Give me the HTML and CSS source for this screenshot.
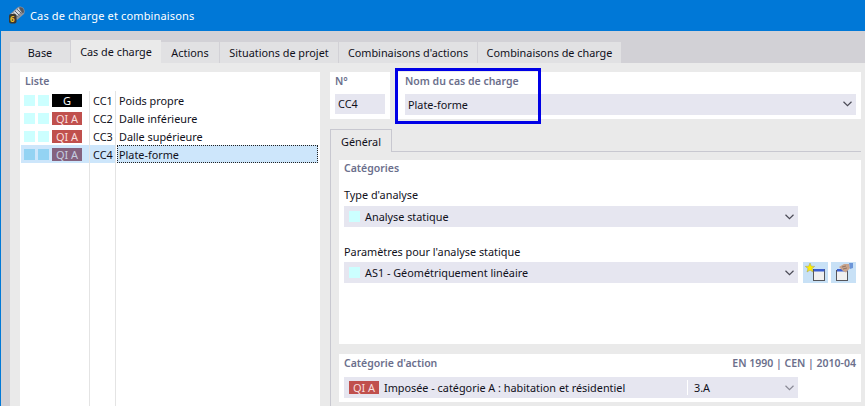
FILE: index.html
```
<!DOCTYPE html>
<html lang="fr">
<head>
<meta charset="utf-8">
<title>Cas de charge et combinaisons</title>
<link rel="stylesheet" href="styles.css">
</head>
<body>
<div class="window">
  <header class="titlebar">
    <svg class="app-icon" width="18" height="18" viewBox="0 0 18 18">
      <path d="M2 8 L10 1 Q13 -0.5 15.5 2 Q17.5 5 16 8 L9 14 Z" fill="#8f959f"/>
      <path d="M3.5 8 L10.5 2 L13 6 L7 12 Z" fill="#d3d7de"/>
      <path d="M11 1.5 Q14 0.5 15.5 3 Q16.5 6 15 7.5 Q12.5 5 11 1.5 Z" fill="#55585f"/>
      <path d="M5 6.5 L9.5 11 M7 5 L11.5 9.5 M9 3.2 L13.5 7.5" stroke="#5d6069" stroke-width="1" fill="none"/>
      <rect x="1" y="8" width="7.5" height="9.5" rx="2" fill="#3a3830"/>
      <text x="2" y="16" class="app-six">6</text>
    </svg>
    <span>Cas de charge et combinaisons</span>
  </header>
  <main class="content">
    <nav class="tabs">
      <div class="tab tab-base">Base</div>
      <div class="tab active tab-cas">Cas de charge</div>
      <div class="tab tab-actions">Actions</div>
      <div class="tab tab-sit">Situations de projet</div>
      <div class="tab tab-ca">Combinaisons d'actions</div>
      <div class="tab tab-cc">Combinaisons de charge</div>
    </nav>
    <div class="page">
      <section class="list">
        <h2 class="list-title">Liste</h2>
        <div class="rows">
          <div class="row">
            <div class="marks"><i class="sw"></i><i class="sw"></i><b class="badge black">G</b></div>
            <div class="code">CC1</div>
            <div class="name">Poids propre</div>
          </div>
          <div class="row">
            <div class="marks"><i class="sw"></i><i class="sw"></i><b class="badge red">QI A</b></div>
            <div class="code">CC2</div>
            <div class="name">Dalle inférieure</div>
          </div>
          <div class="row">
            <div class="marks"><i class="sw"></i><i class="sw"></i><b class="badge red">QI A</b></div>
            <div class="code">CC3</div>
            <div class="name">Dalle supérieure</div>
          </div>
          <div class="row selected">
            <div class="marks"><i class="sw"></i><i class="sw"></i><b class="badge dim">QI A</b></div>
            <div class="code">CC4</div>
            <div class="name">Plate-forme</div>
          </div>
          <div class="row filler">
            <div class="marks"></div>
            <div class="code"></div>
            <div class="name"></div>
          </div>
        </div>
      </section>
      <section class="detail">
        <div class="head">
          <div class="card card-no">
            <div class="label">N°</div>
            <div class="field head-field short">CC4</div>
          </div>
          <div class="card card-name">
            <div class="label">Nom du cas de charge</div>
            <div class="field head-field between">Plate-forme
              <svg class="chev" width="9" height="6" viewBox="0 0 9 6"><path d="M0.5 0.8 L4.5 4.6 L8.5 0.8" fill="none" stroke="#4a4a55" stroke-width="1.2"/></svg>
            </div>
            <div class="highlight"></div>
          </div>
        </div>
        <div class="subtabs"><div class="subtab">Général</div></div>
        <div class="subpage">
          <div class="group group-cat">
            <h3 class="group-title">Catégories</h3>
            <div class="flabel first">Type d'analyse</div>
            <div class="select-row">
              <div class="field select"><span class="sel-l"><i class="sw"></i>Analyse statique</span>
                <svg class="chev" width="9" height="6" viewBox="0 0 9 6"><path d="M0.5 0.8 L4.5 4.6 L8.5 0.8" fill="none" stroke="#4a4a55" stroke-width="1.2"/></svg>
              </div>
            </div>
            <div class="flabel second">Paramètres pour l'analyse statique</div>
            <div class="select-row">
              <div class="field select"><span class="sel-l"><i class="sw"></i>AS1 - Géométriquement linéaire</span>
                <svg class="chev" width="9" height="6" viewBox="0 0 9 6"><path d="M0.5 0.8 L4.5 4.6 L8.5 0.8" fill="none" stroke="#4a4a55" stroke-width="1.2"/></svg>
              </div>
              <div class="icon-btn">
                <svg width="21" height="19" viewBox="0 0 21 19">
                  <rect x="8.5" y="6.5" width="11" height="11" fill="#f0f0f0" stroke="#55555a"/>
                  <rect x="9" y="6" width="10.5" height="2.5" fill="#3a5fd0"/>
                  <path d="M5 0 L6.3 3.2 L9.7 3.4 L7 5.6 L8 9 L5 7.1 L2 9 L3 5.6 L0.3 3.4 L3.7 3.2 Z" fill="#ffee00" stroke="#a8a04a" stroke-width=".5"/>
                </svg>
              </div>
              <div class="icon-btn">
                <svg width="21" height="19" viewBox="0 0 21 19">
                  <rect x="3.5" y="7.5" width="11" height="10" fill="#f0f0f0" stroke="#55555a"/>
                  <rect x="4" y="6" width="10.5" height="2.5" fill="#3a5fd0"/>
                  <path d="M6 4 L11 1 L16 1 L17 5 L13 9.5 L10 8 Z" fill="#c9a48c"/>
                  <path d="M16 0 L20 0 L20 5 L17 6 Z" fill="#6d96d8"/>
                  <path d="M9 4 L13 3 M10 6 L14 5" stroke="#8f7464" fill="none"/>
                </svg>
              </div>
            </div>
          </div>
          <div class="group group-act">
            <div class="act-head">
              <h3 class="group-title">Catégorie d'action</h3>
              <div class="norm">EN 1990 | CEN | 2010-04</div>
            </div>
            <div class="field select act-select">
              <span class="sel-l act-main"><b class="badge red">QI A</b>Imposée - catégorie A : habitation et résidentiel</span>
              <span class="act-code">3.A</span>
              <svg class="chev" width="9" height="6" viewBox="0 0 9 6"><path d="M0.5 0.8 L4.5 4.6 L8.5 0.8" fill="none" stroke="#8a8a95" stroke-width="1.2"/></svg>
            </div>
          </div>
        </div>
      </section>
    </div>
  </main>
</div>
</body>
</html>
```
FILE: styles.css
```
* { box-sizing: border-box; }
html, body { margin: 0; height: 100%; overflow: hidden; }
body { font-family: "Noto Sans", "Open Sans", sans-serif; font-size: 10.85px; color: #10101a; }
.window { width: 865px; height: 406px; display: flex; flex-direction: column; background: #d2d1d6; overflow: hidden; }
.titlebar { height: 31px; flex: none; background: #0078d7; color: #fff; display: flex; align-items: center; padding: 0 0 1px 8px; font-size: 11px; letter-spacing: .14px; gap: 4px; }
.app-icon { flex: none; }
.app-six { font: bold 8px "Noto Sans", sans-serif; fill: #f2c22e; }
.content { flex: 1; min-height: 0; display: flex; flex-direction: column; padding: 9px 0 0 9px; border-left: 1px solid #0078d7; }
.tabs { display: flex; height: 23px; flex: none; align-items: flex-end; }
.tab { height: 21px; background: #e1e1e3; display: flex; align-items: center; justify-content: center; border-right: 1px solid #d2d1d6; }
.tab.active { height: 23px; background: #eaeaea; border-right: 0; }
.tab-base { width: 61px; }
.tab-cas { width: 90px; }
.tab-actions { width: 59px; }
.tab-sit { width: 119px; }
.tab-ca { width: 139px; }
.tab-cc { width: 144px; }
.page { flex: 1; min-height: 0; background: #eaeaea; display: flex; padding: 9px 4px 0 10px; gap: 10px; }
.list { width: 300px; flex: none; background: #fff; display: flex; flex-direction: column; }
.list-title { margin: 0; font-size: 10.5px; font-weight: 600; color: #6b6f8c; height: 19px; padding: 2px 0 0 5px; line-height: 15px; }
.rows { flex: 1; display: flex; flex-direction: column; padding: 0 1px; }
.row { display: flex; height: 18px; flex: none; }
.row.filler { flex: 1; }
.marks { width: 69px; flex: none; display: flex; align-items: center; gap: 3px; padding-left: 3px; border-right: 1px solid #e4e4e4; }
.code { width: 26px; flex: none; padding-left: 3px; line-height: 19px; border-right: 1px solid #e4e4e4; }
.name { flex: 1; line-height: 19px; padding-left: 3px; }
.sw { display: block; width: 11px; height: 11px; background: #ccffff; flex: none; }
.badge { display: flex; align-items: center; justify-content: center; font-weight: 400; color: #fff; width: 30px; height: 13px; font-size: 11px; flex: none; }
.black { background: #000; }
.red { background: #c0504d; color: #f8dede; }
.dim { background: #84627e; color: #c5cfe0; }
.selected .marks, .selected .code { background: #cde6fb; }
.selected .sw { background: #93d3f3; }
.selected .name { background: #cde6fb; outline: 1px dotted #222; outline-offset: -1px; margin: 0 1px; padding-left: 2px; }
.detail { flex: 1; min-width: 0; display: flex; flex-direction: column; }
.head { display: flex; height: 47px; flex: none; gap: 5px; }
.card { background: #fff; padding: 2px 5px 0; position: relative; }
.card-no { width: 60px; flex: none; }
.card-name { flex: 1; padding: 2px 5px 0 10px; }
.label { font-size: 10.5px; font-weight: 600; color: #6b6f8c; line-height: 15px; height: 20px; }
.field { background: #e6e6f0; height: 21px; display: flex; align-items: center; padding: 0 3px; }
.head-field { padding-bottom: 1px; }
.short { height: 20px; }
.between { justify-content: space-between; padding-right: 4px; }
.highlight { position: absolute; left: 0; top: -4px; width: 146px; height: 56px; border: 3px solid #0000e6; pointer-events: none; }
.subtabs { height: 33px; flex: none; display: flex; align-items: flex-end; border-bottom: 1px solid #c8c8d0; }
.subtab { width: 62px; height: 23px; border: 1px solid #c8c8d0; border-bottom: 0; background: #eaeaea; display: flex; align-items: center; justify-content: center; margin-bottom: -1px; }
.subpage { flex: 1; min-height: 0; display: flex; flex-direction: column; gap: 10px; padding: 8px 0 0 8px; border-left: 1px solid #c8c8d0; }
.group { background: #fff; padding: 1px 5px 0; }
.group-cat { height: 184px; flex: none; }
.group-act { height: 48px; flex: none; }
.group-title { margin: 0; font-size: 10.5px; font-weight: 600; color: #6b6f8c; line-height: 15px; }
.flabel { line-height: 15px; }
.flabel.first { margin-top: 11px; height: 19px; }
.flabel.second { margin-top: 17px; height: 18px; }
.select-row { display: flex; gap: 3px; }
.select-row > .field { width: 454px; margin-right: 2px; }
.select { justify-content: space-between; padding: 0 4px 0 5px; }
.sel-l { display: flex; align-items: center; gap: 5px; }
.icon-btn { width: 25px; height: 21px; background: #c8e1f6; display: flex; align-items: center; justify-content: center; }
.act-head { display: flex; justify-content: space-between; align-items: flex-start; height: 22px; padding-top: 1px; }
.norm { font-size: 10.5px; font-weight: 600; color: #6b6f8c; line-height: 15px; }
.act-select { width: 454px; }
.act-main { width: 339px; flex: none; height: 15px; border-right: 1px solid #fff; }
.act-code { flex: 1; padding-left: 6px; }
```
